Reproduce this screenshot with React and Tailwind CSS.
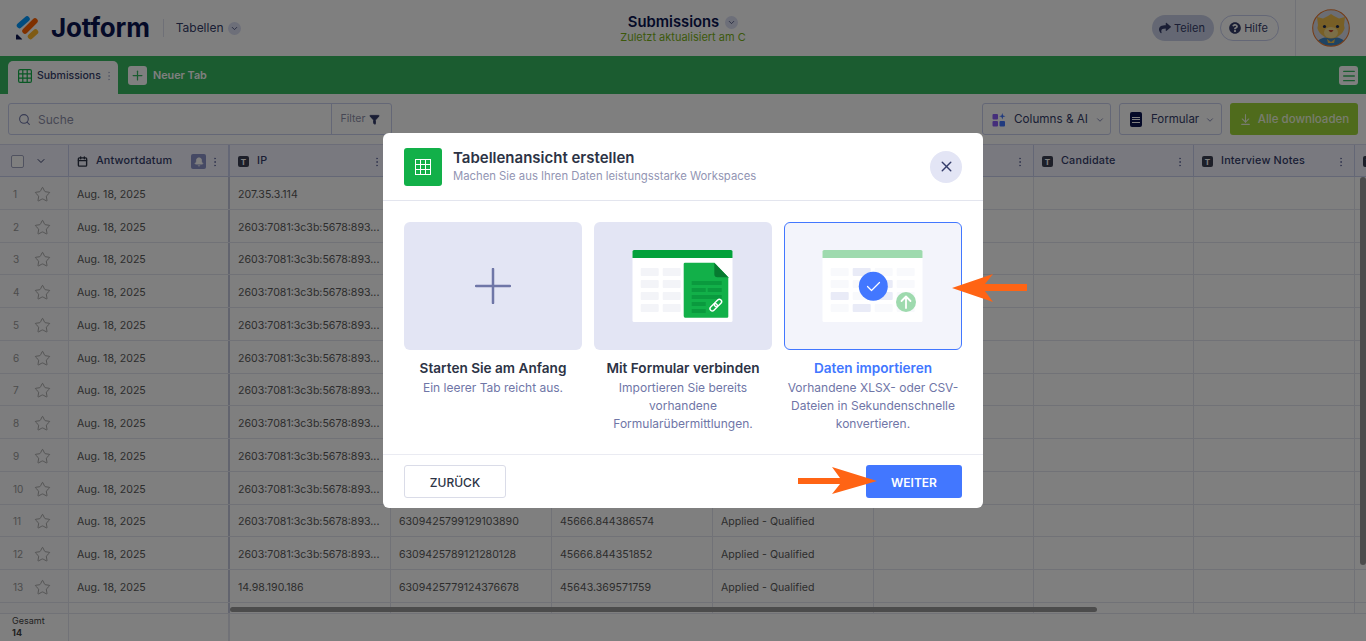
import React from "react";
import { ChevronDown, Star, EllipsisVertical, Search, Funnel, Plus, X, ArrowDownToLine, Menu, Bell, Calendar } from "lucide-react";
import { FaShare, FaQuestionCircle } from "react-icons/fa";

const cols = ["w-[161px]","w-[161px]","w-[161px]","w-[161px]","w-[161px]","w-[160px]","w-[160px]","w-[161px]","w-[161px]"];
const ipLong = "2603:7081:3c3b:5678:893...";
const ips = ["207.35.3.114",ipLong,ipLong,ipLong,ipLong,ipLong,ipLong,ipLong,ipLong,ipLong,ipLong,ipLong,"14.98.190.186",""];
const extra = {
  11:["6309425799129103890","45666.844386574","Applied - Qualified"],
  12:["6309425789121280128","45666.844351852","Applied - Qualified"],
  13:["6309425779124376678","45643.369571759","Applied - Qualified"],
};
const headers = ["Antwortdatum","IP","","","","","Candidate","Interview Notes",""];

function TBadge(){
  return <span className="flex h-[11px] w-[11px] shrink-0 items-center justify-center rounded-[2px] bg-[#3a3f52] text-[8px] font-bold leading-none text-white">T</span>;
}
function Logo(){
  return (
    <svg width="24" height="26" viewBox="0 0 24 26" className="shrink-0">
      <g fill="none" strokeLinecap="round" strokeWidth="5.5">
        <line x1="3.5" y1="10.5" x2="11" y2="4" stroke="#0099ff"/>
        <line x1="9" y1="16" x2="19" y2="6" stroke="#ff6100"/>
        <line x1="14.5" y1="21.5" x2="19.5" y2="17" stroke="#ffb629"/>
      </g>
      <path d="M0 24.5 V20.5 Q0 19 1.5 19.5 L6 24 Q6.5 24.5 5.5 24.5 Z" fill="#0a1551"/>
    </svg>
  );
}
function Avatar(){
  return (
    <svg width="38" height="38" viewBox="0 0 38 38">
      <defs><clipPath id="av"><circle cx="19" cy="19" r="18"/></clipPath></defs>
      <circle cx="19" cy="19" r="18" fill="#d6dbe8"/>
      <g clipPath="url(#av)">
        <path d="M3 38 Q4 28 19 28 Q34 28 35 38 Z" fill="#3f86c4"/>
        <path d="M5 8 L11 9.5 L16 7 L19 5 L22 7 L27 9.5 L33 8 L32 16 Q34 21 28 26 Q24 29.5 19 29.5 Q14 29.5 10 26 Q4 21 6 16 Z" fill="#f0bf4c"/>
        <ellipse cx="19" cy="23.5" rx="7" ry="5.5" fill="#f7dc8e"/>
        <circle cx="12.5" cy="17.5" r="1.6" fill="#1c2b52"/>
        <circle cx="25.5" cy="17.5" r="1.6" fill="#1c2b52"/>
        <path d="M16.5 21 Q19 25.5 21.5 21 Z" fill="#c2402b"/>
        <path d="M15 30 L19 33 L23 30 L22 34 H16 Z" fill="#f0bf4c"/>
      </g>
      <circle cx="19" cy="19" r="18.3" fill="none" stroke="#e8772e" strokeWidth="1.1"/>
    </svg>
  );
}
function Cell({i,children}){
  return <div className={`${cols[i]} flex shrink-0 items-center border-r ${i===0?"border-r-[2px] border-r-[#c5c8dd]":"border-[#e3e5ee]"} px-2 pt-[4px] text-[10.6px] text-[#5a5a5a]`}>{children}</div>;
}
function Row({n}){
  const e = extra[n] || ["","",""];
  return (
    <div className="flex h-[32.75px] border-b border-[#e3e5ee] bg-white">
      <div className="flex w-[69px] shrink-0 items-center border-r border-[#e3e5ee] bg-[#fafafc] pl-[13px] pt-[3px] text-[10px] text-[#999]">
        <span className="w-[21px]">{n}</span>
        <Star size={17} strokeWidth={1} className="text-[#8a8a8a]"/>
      </div>
      <Cell i={0}>Aug. 18, 2025</Cell>
      <Cell i={1}>{ips[n-1]}</Cell>
      <Cell i={2}>{e[0]}</Cell>
      <Cell i={3}>{e[1]}</Cell>
      <Cell i={4}>{e[2]}</Cell>
      <Cell i={5}></Cell><Cell i={6}></Cell><Cell i={7}></Cell><Cell i={8}></Cell>
    </div>
  );
}
function Sheet({h,children}){
  return (
    <svg width="178" height="128" viewBox="0 0 178 128" className="block">
      <rect x="38.5" y="28" width="100" height="72" rx="1.5" fill="#fff"/>
      <path d="M38.5 36 V29.5 Q38.5 28 40 28 H137 Q138.5 28 138.5 29.5 V36 Z" fill={h}/>
      {children}
    </svg>
  );
}
const rowsY=[46,58,70,82];
function Cards2(){
  return (
    <Sheet h="#03a13b">
      {rowsY.map(y=><g key={y} fill="#f3f4f8"><rect x="46.7" y={y} width="18" height="8" rx="1"/><rect x="68.7" y={y} width="18" height="8" rx="1"/></g>)}
      <path d="M91 40.7 Q89.7 40.7 89.7 42 V94 Q89.7 95.7 91.2 95.7 H133 Q134.3 95.7 134.3 94.4 V55.3 L120.3 40.7 Z" fill="#12b049"/>
      <path d="M120.3 40.7 V52 Q120.3 55.3 123.5 55.3 H134.3 Z" fill="#067a30"/>
      <g fill="#0a9a3e">
        <rect x="97.7" y="59" width="30" height="4"/>
        <rect x="97.7" y="66" width="14" height="4"/><rect x="113.7" y="66" width="14" height="4"/>
        <rect x="97.7" y="73" width="30" height="4"/>
        <rect x="97.7" y="80" width="14" height="4"/>
        <rect x="97.7" y="87" width="14" height="4"/>
      </g>
      <g fill="none" stroke="#fff" strokeWidth="1.4" transform="rotate(-45 122 83)">
        <rect x="114.5" y="80.7" width="8.5" height="4.6" rx="2.3"/>
        <rect x="120.5" y="80.7" width="8.5" height="4.6" rx="2.3"/>
      </g>
    </Sheet>
  );
}
function Cards3(){
  const xs=[46.7,68.7,90.7,112.7];
  const dark={ "1-0":1,"0-2":1,"1-3":1,"2-1":1,"2-2":1 };
  return (
    <Sheet h="#9edaae">
      {rowsY.map((y,r)=>xs.map((x,c)=><rect key={x+"-"+y} x={x} y={y} width="18" height="8" rx="1" fill={dark[c+"-"+r]?"#e9ebf7":"#f8f9fc"}/>))}
      <circle cx="89.3" cy="64.3" r="14.5" fill="#4277ff"/>
      <path d="M83.5 64.5 L87.5 68.5 L95.5 60.5" fill="none" stroke="#fff" strokeWidth="1.2" strokeLinecap="round" strokeLinejoin="round"/>
      <circle cx="122" cy="80" r="10" fill="#9edaae"/>
      <path d="M122 86 V74.5 M117.5 79 L122 74.5 L126.5 79" fill="none" stroke="#fff" strokeWidth="1.8" strokeLinecap="round" strokeLinejoin="round"/>
    </Sheet>
  );
}
function Option({title,desc,active,children}){
  return (
    <div className="w-[178px]">
      <div className={`h-[128px] overflow-hidden rounded-[6px] ${active?"border border-[#4277ff] bg-[#f3f4fb]":"bg-[#e3e5f4]"}`}>{children}</div>
      <div className={`mt-[9px] text-center text-[13.6px] font-semibold leading-[18px] ${active?"text-[#4277ff]":"text-[#2c3345]"}`}>{title}</div>
      <div className="mt-[2px] text-center text-[12px] leading-[18px] text-[#6f76a7]">{desc}</div>
    </div>
  );
}

export default function App(){
  return (
    <div className="relative h-[641px] w-[1366px] overflow-hidden bg-white font-['Inter',sans-serif]">
      <header className="relative flex h-14 items-center pl-4 pr-[16px]">
        <Logo/>
        <span className="ml-[11px] text-[26px] font-bold leading-none tracking-[-0.2px] text-[#0a1551]">Jotform</span>
        <div className="ml-[13px] h-[18px] w-px bg-[#dfe1ee]"></div>
        <span className="ml-[12px] text-[12px] text-[#343c6a]">Tabellen</span>
        <span className="ml-[4px] flex h-[13px] w-[13px] items-center justify-center rounded-full bg-[#dadef3]"><ChevronDown size={9} className="text-[#343c6a]"/></span>
        <div className="flex-1"></div>
        <div className="absolute left-[500px] top-[14px] flex w-[366px] flex-col items-center">
          <div className="flex items-center gap-[6px]">
            <span className="text-[14.8px] font-semibold leading-[17px] text-[#0a1551]">Submissions</span>
            <span className="flex h-[13px] w-[13px] items-center justify-center rounded-full bg-[#dadef3]"><ChevronDown size={9} className="text-[#343c6a]"/></span>
          </div>
          <span className="text-[11px] leading-[13px] text-[#7ab317]">Zuletzt aktualisiert am C</span>
        </div>
        <div className="flex h-[26px] w-[62px] items-center justify-center gap-[3px] rounded-full bg-[#c8cfe6] pr-[2px] text-[11px] text-[#343c6a]"><FaShare size={12}/>Teilen</div>
        <div className="ml-[6px] flex h-[26px] w-[59px] items-center justify-center gap-[3px] rounded-full border border-[#c8ceed] pr-[2px] text-[11px] text-[#343c6a]"><FaQuestionCircle size={12}/>Hilfe</div>
        <div className="ml-[16px] h-14 w-px bg-[#e3e5ee]"></div>
        <div className="ml-[16px]"><Avatar/></div>
      </header>

      <div className="flex h-[38px] items-end bg-[#36b860] pl-2 pr-2">
        <div className="flex h-[33px] w-[110px] items-center rounded-t-[5px] bg-white pb-1 pl-[10px] text-[10.5px] font-medium text-[#343c6a]">
          <svg width="14" height="14" viewBox="0 0 14 14" fill="none" stroke="#12b049" strokeWidth="1.2"><rect x="0.6" y="0.6" width="12.8" height="12.8" rx="1.5"/><path d="M4.8 1 V13 M9.2 1 V13 M1 4.8 H13 M1 9.2 H13"/></svg>
          <span className="ml-[5px]">Submissions</span>
          <EllipsisVertical size={12} className="ml-[2px] text-[#b8bdd6]"/>
        </div>
        <div className="mb-[9px] ml-[10px] flex h-[19px] w-[19px] items-center justify-center rounded-[3px] bg-white"><Plus size={15} className="text-[#36b860]"/></div>
        <span className="mb-[10px] ml-[6px] text-[10.8px] font-semibold text-white">Neuer Tab</span>
        <div className="flex-1"></div>
        <div className="mb-[9px] flex h-[19px] w-[19px] items-center justify-center rounded-[3px] bg-white"><Menu size={16} className="text-[#36b860]"/></div>
      </div>

      <div className="flex h-[50px] items-start pl-2 pr-2 pt-[9px]">
        <div className="flex h-8 w-[384px] items-center rounded-[3px] border border-[#c8ceed] text-[12px]">
          <Search size={13} className="ml-[9px] text-[#6f76a7]"/>
          <span className="ml-[7px] mt-[2px] flex-1 text-[#8d8fa8]">Suche</span>
          <div className="flex h-full w-[60px] items-center justify-center gap-[4px] border-l border-[#c8ceed] pr-[2px] text-[10.5px] text-[#8d8fa8]">Filter<Funnel size={11} fill="#343c6a" className="text-[#343c6a]"/></div>
        </div>
        <div className="flex-1"></div>
        <div className="flex h-8 w-[129px] items-center rounded-[3px] border border-[#c8ceed] pl-[9px] pt-[1px] text-[11.7px] text-[#343c6a]">
          <svg width="14" height="14" viewBox="0 0 14 14"><rect x="0.5" y="1" width="5.5" height="5.5" rx="1" fill="#8b5cf6"/><rect x="0.5" y="8" width="5.5" height="5.5" rx="1" fill="#8b5cf6"/><rect x="7.5" y="8" width="5.5" height="5.5" rx="1" fill="#4277ff"/><path d="M10.3 0 L11.1 2.4 L13.5 3.2 L11.1 4 L10.3 6.4 L9.5 4 L7.1 3.2 L9.5 2.4 Z" fill="#4277ff"/></svg>
          <span className="ml-[8px]">Columns &amp; AI</span>
          <ChevronDown size={10} className="ml-[7px] text-[#6f76a7]"/>
        </div>
        <div className="ml-2 flex h-8 w-[103px] items-center rounded-[3px] border border-[#c8ceed] pl-[10px] pt-[1px] text-[11.5px] text-[#343c6a]">
          <span className="flex h-[15px] w-[12px] flex-col justify-center gap-[1.5px] rounded-[2px] bg-[#0a1551] px-[2px]"><i className="block h-px bg-white"></i><i className="block h-px bg-white"></i><i className="block h-px bg-white"></i></span>
          <span className="ml-[9px]">Formular</span>
          <ChevronDown size={10} className="ml-[6px] text-[#6f76a7]"/>
        </div>
        <div className="ml-2 flex h-8 w-[128px] items-center justify-center gap-[6px] rounded-[3px] bg-[#9ed638] pt-[1px] text-[11.5px] font-medium text-[#f1f9df]">
          <ArrowDownToLine size={13}/>Alle downloaden
        </div>
      </div>

      <div className="relative h-[497px] overflow-hidden border-t border-[#d8dbf0]">
        <div className="flex h-[32px] border-b border-[#c8ceed] bg-[#f3f3fe]">
          <div className="flex w-[69px] shrink-0 items-center border-r border-[#c8ceed] pl-[11px] pt-[1px]">
            <span className="h-[13px] w-[13px] rounded-[2px] border border-[#a0a4c0] bg-white"></span>
            <ChevronDown size={12} className="ml-[11px] text-[#343c6a]"/>
          </div>
          {headers.map((h,i)=>(
            <div key={i} className={`${cols[i]} flex shrink-0 items-center border-r ${i===0?"border-r-[2px]":""} border-[#c8ceed] pl-2 pr-[7px] pt-[2px] text-[10.8px] font-medium tracking-[0.2px] text-[#343c6a]`}>
              {i===0 ? <Calendar size={11} strokeWidth={3} className="text-[#2c3345]"/> : <TBadge/>}
              <span className="ml-[8px] flex-1">{h}</span>
              {i===0 && <span className="mr-[3px] flex h-[15px] w-[15px] items-center justify-center rounded-[2px] bg-[#8a92c8]"><Bell size={10} fill="#fff" className="text-white"/></span>}
              <EllipsisVertical size={12} className="text-[#6f76a7]"/>
            </div>
          ))}
        </div>
        {Array.from({length:14},(_,i)=><Row key={i} n={i+1}/>)}
        <div className="absolute bottom-[29px] left-[230px] h-[5px] w-[867px] rounded-full bg-[#999]"></div>
        <div className="absolute right-0 top-[32px] h-[388px] w-[6px] rounded-full bg-[#999]"></div>
        <div className="absolute bottom-0 left-0 flex h-[28px] w-full border-t border-[#e3e5ee] bg-white">
          <div className="flex w-[69px] flex-col justify-center border-r border-[#e3e5ee] pb-[2px] pl-3 text-[9px] leading-[12px] text-[#444]">
            <span>Gesamt</span><span className="font-bold">14</span>
          </div>
          <div className="w-[161px] border-r-[2px] border-[#e3e5ee]"></div>
        </div>
      </div>

      <div className="absolute inset-0 flex justify-center bg-black/50 pt-[133px]">
        <div className="h-[375px] w-[600px] rounded-[6px] bg-white">
          <div className="flex h-[68px] items-center border-b border-[#e3e5ee] pl-[21px] pr-[21px]">
            <div className="flex h-[38px] w-[38px] items-center justify-center rounded-[3px] bg-[#12b049]">
              <svg width="16" height="16" viewBox="0 0 16 16"><rect width="16" height="16" fill="#fff"/>{[1,6,11].map(x=>[1,6,11].map(y=><rect key={x+"-"+y} x={x} y={y} width="4" height="4" fill="#12b049"/>))}</svg>
            </div>
            <div className="ml-[11px] flex-1">
              <div className="text-[15px] font-semibold leading-[18px] text-[#2c3345]">Tabellenansicht erstellen</div>
              <div className="mt-px text-[11.3px] leading-[17px] text-[#9295b3]">Machen Sie aus Ihren Daten leistungsstarke Workspaces</div>
            </div>
            <div className="flex h-8 w-8 items-center justify-center rounded-full bg-[#e3e5f5]"><X size={17} className="text-[#343c6a]"/></div>
          </div>
          <div className="flex h-[254px] gap-3 border-b border-[#eaebf2] pl-[21px] pt-[21px]">
            <Option title="Starten Sie am Anfang" desc="Ein leerer Tab reicht aus.">
              <div className="flex h-full items-center justify-center"><svg width="36" height="36" viewBox="0 0 36 36"><path d="M18 1 V35 M1 18 H35" stroke="#6f76a7" strokeWidth="2.5" strokeLinecap="round"/></svg></div>
            </Option>
            <Option title="Mit Formular verbinden" desc={<>Importieren Sie bereits<br/>vorhandene<br/>Formularübermittlungen.</>}><Cards2/></Option>
            <Option active title="Daten importieren" desc={<>Vorhandene XLSX- oder CSV-<br/>Dateien in Sekundenschnelle<br/>konvertieren.</>}><div className="-m-px"><Cards3/></div></Option>
          </div>
          <div className="flex h-[53px] items-center justify-between px-[21px]">
            <div className="flex h-[33px] w-[102px] items-center justify-center rounded-[3px] border border-[#dadce8] pt-[2px] text-[12px] font-medium text-[#2c3345]">ZURÜCK</div>
            <div className="flex h-[33px] w-[96px] items-center justify-center rounded-[3px] bg-[#4277ff] pt-[2px] text-[12px] font-semibold text-white">WEITER</div>
          </div>
        </div>
      </div>

      <svg className="absolute left-[945px] top-[268px]" width="90" height="40" viewBox="945 268 90 40">
        <path d="M952 288 L993 274 L985 284 H1027 V291 H985 L993 302 Z" fill="#ff6414"/>
      </svg>
      <svg className="absolute left-[790px] top-[460px]" width="95" height="40" viewBox="790 460 95 40">
        <path d="M877 481 L832 467 L840 478 H798 V484 H840 L832 494 Z" fill="#ff6414"/>
      </svg>
    </div>
  );
}
